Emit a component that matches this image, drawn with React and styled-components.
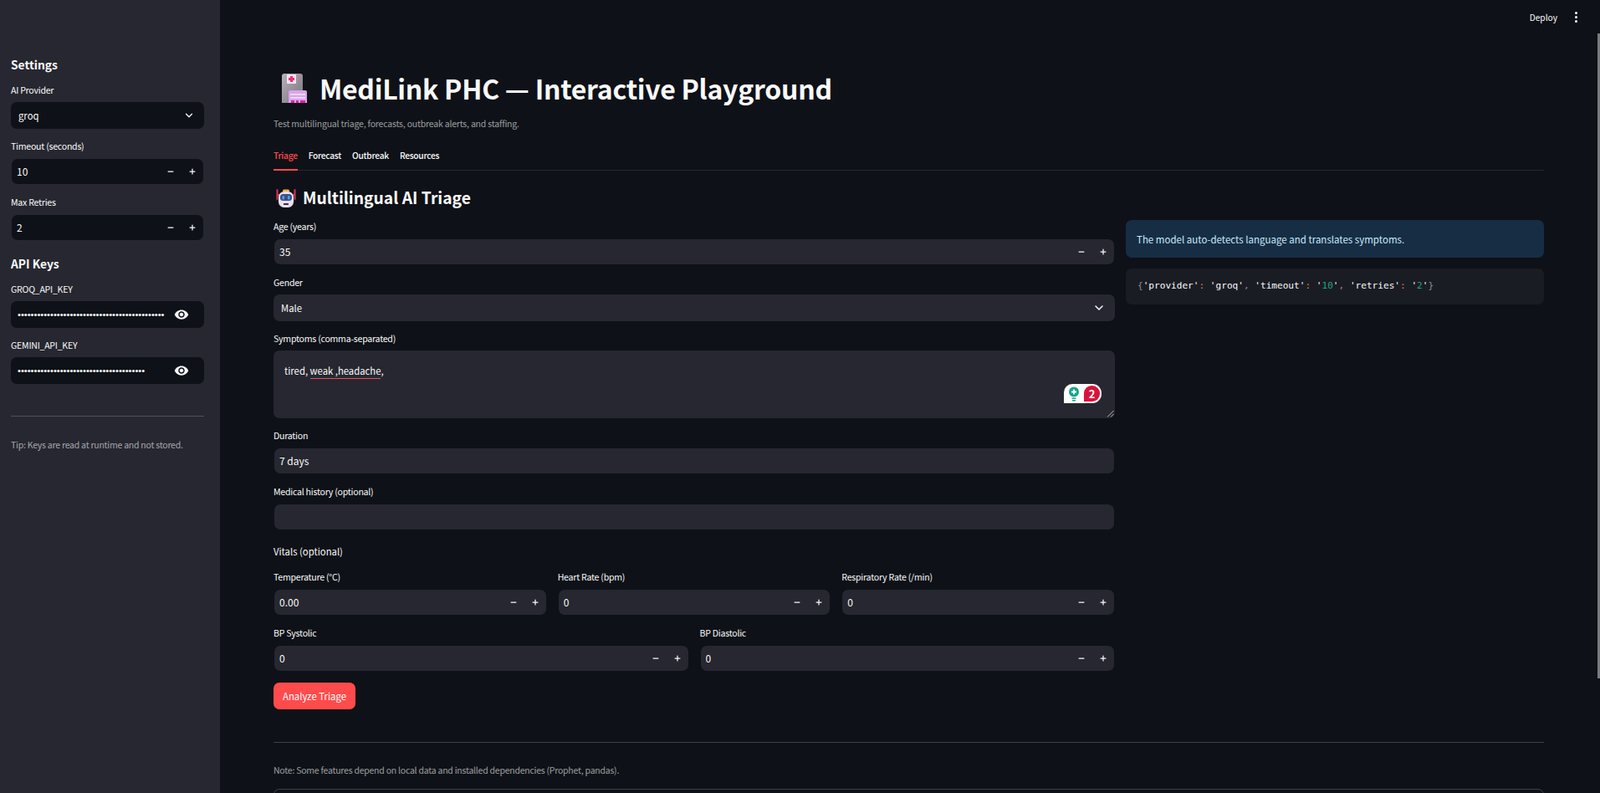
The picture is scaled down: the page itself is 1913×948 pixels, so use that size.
import React from "react";
import styled, { createGlobalStyle } from "styled-components";
import { ChevronDown, Minus, Plus } from "lucide-react";
import { MdVisibility } from "react-icons/md";

const sans = `"Noto Sans CJK SC", "Noto Sans", sans-serif`;

const GlobalStyle = createGlobalStyle`
  html, body {
    margin: 0;
    height: 948px;
    overflow: hidden;
    background: #0e1117;
    color: #fafafa;
    font-family: ${sans};
  }
  * {
    box-sizing: border-box;
  }
`;

const Shell = styled.div`
  display: flex;
  height: 948px;
  overflow: hidden;
`;

const Sidebar = styled.aside`
  flex: 0 0 263px;
  height: 948px;
  padding: 65px 19px 0 13px;
  background: #262730;
`;

const SideHeading = styled.h3`
  margin: ${(p) => (p.$first ? "0 0 11px" : "15px 0 11px")};
  font-size: 13.8px;
  line-height: 24px;
  font-weight: 600;
`;

const Field = styled.div`
  display: flex;
  flex-direction: column;
  margin-bottom: 13px;
`;

const Label = styled.label`
  display: block;
  margin-bottom: 6px;
  font-size: 10.6px;
  line-height: 16px;
  letter-spacing: -0.25px;
  color: #fafafa;
`;

const Box = styled.div`
  display: flex;
  align-items: center;
  height: ${(p) => (p.$narrow ? "30px" : "32px")};
  margin: ${(p) => (p.$narrow ? "1px" : "0")};
  background: ${(p) => (p.$side ? "#0e1117" : "#262730")};
  border-radius: 7px;
`;

const TextInput = styled.input`
  flex: 1;
  min-width: 0;
  padding: 0 7px 2px 6px;
  border: 0;
  outline: 0;
  background: transparent;
  color: #fafafa;
  font-family: ${sans};
  font-size: 12px;
`;

const KeyInput = styled(TextInput)`
  padding: 0 8px;
  font-family: "Liberation Sans", sans-serif;
  font-size: 11.15px;
`;

const SelectText = styled.span`
  flex: 1;
  padding-left: 9px;
  font-size: 11.3px;
`;

const Chevron = styled.span`
  display: flex;
  margin-right: 11px;
  color: #fafafa;
`;

const Step = styled.span`
  display: flex;
  justify-content: center;
  flex: 0 0 26px;
  color: #fafafa;
`;

const EyeButton = styled.span`
  display: flex;
  margin-right: 18px;
  font-size: 18px;
  color: #fafafa;
`;

const Rule = styled.hr`
  margin: ${(p) => p.$margin};
  border: 0;
  border-top: 1px solid rgba(250, 250, 250, 0.2);
`;

const Hint = styled.p`
  margin: 0;
  font-size: 10.5px;
  line-height: 16px;
  letter-spacing: -0.24px;
  color: rgba(250, 250, 250, 0.6);
`;

const Main = styled.main`
  flex: 1;
  min-width: 0;
  padding: 83px 67px 0 64px;
`;

const Toolbar = styled.div`
  position: absolute;
  top: 0;
  right: 0;
  display: flex;
  align-items: center;
  height: 40px;
  padding-right: 27px;
  gap: 21px;
  font-size: 10.2px;
`;

const KebabDots = styled.span`
  display: flex;
  flex-direction: column;
  gap: 2px;
  i {
    width: 3px;
    height: 3px;
    border-radius: 50%;
    background: #fafafa;
  }
`;

const ScrollThumb = styled.div`
  position: absolute;
  top: 40px;
  right: 0;
  width: 3px;
  height: 771px;
  background: #7b7c80;
`;

const Title = styled.h1`
  display: flex;
  align-items: center;
  margin: 0 0 13px;
  height: 44px;
  font-size: 32px;
  line-height: 44px;
  letter-spacing: -0.27px;
  font-weight: 700;
`;

const TitleIcon = styled.svg`
  flex: none;
  width: 30px;
  height: 35px;
  margin: 0 15px 0 10px;
`;

const Subtitle = styled(Hint)`
  margin-bottom: 18px;
  letter-spacing: -0.2px;
`;

const Tabs = styled.nav`
  display: flex;
  gap: 13px;
  height: 30px;
  border-bottom: 1px solid #262730;
  margin-bottom: 18px;
`;

const Tab = styled.span`
  height: 30px;
  line-height: 24px;
  font-size: 10.2px;
  font-weight: 500;
  letter-spacing: -0.25px;
  color: ${(p) => (p.$active ? "#ff4b4b" : "#fafafa")};
  border-bottom: 2px solid ${(p) => (p.$active ? "#ff4b4b" : "transparent")};
`;

const SectionTitle = styled.h2`
  display: flex;
  align-items: center;
  margin: 0 0 11px;
  height: 30px;
  padding-bottom: 2px;
  font-size: 19.3px;
  line-height: 28px;
  font-weight: 600;
`;

const SectionIcon = styled.svg`
  flex: none;
  width: 24px;
  height: 24px;
  margin: 2px 8px 0 3px;
`;

const Columns = styled.div`
  display: grid;
  grid-template-columns: 1006px 500px;
  gap: 13px;
`;

const Info = styled.div`
  display: flex;
  align-items: center;
  height: 45px;
  padding: 0 13px;
  margin-bottom: 13px;
  border-radius: 7px;
  background: #172d43;
  color: #c7ebff;
  font-size: 11.5px;
`;

const Code = styled.pre`
  display: flex;
  align-items: center;
  height: 43px;
  margin: 0;
  padding: 0 14px 2px;
  border-radius: 7px;
  background: #1a1c24;
  color: #fafafa;
  font-family: "DejaVu Sans Mono", monospace;
  font-size: 11.1px;
`;

const Punct = styled.span`
  color: ${(p) => p.$color};
`;

const TextArea = styled.div`
  position: relative;
  height: 81px;
  padding: 15px 13px;
  background: #262730;
  border-radius: 7px;
  font-size: 11.3px;
  line-height: 18px;
`;

const Misspelled = styled.span`
  border-bottom: 1.5px solid #e8505f;
  padding-bottom: 1px;
`;

const GrammarBadge = styled.div`
  position: absolute;
  right: 16px;
  bottom: 18px;
  display: flex;
  align-items: center;
  width: 45px;
  height: 23px;
  padding: 2px;
  border-radius: 10px 11px 11px 0;
  background: #fff;
`;

const BulbWrap = styled.svg`
  width: 22px;
  height: 19px;
`;

const IssueCount = styled.span`
  flex: 1;
  height: 19px;
  border-radius: 9px 9px 9px 0;
  background: #d9143a;
  color: #fff;
  font-size: 13px;
  font-weight: 700;
  line-height: 19px;
  text-align: center;
`;

const ResizeGrip = styled.svg`
  position: absolute;
  right: 1px;
  bottom: 1px;
  width: 9px;
  height: 9px;
`;

const GroupHeading = styled.div`
  margin: 15px 0 13px;
  font-size: 11.3px;
  line-height: 20px;
`;

const Row = styled.div`
  display: grid;
  grid-template-columns: repeat(${(p) => p.$cols}, 1fr);
  gap: 13px;
`;

const PrimaryButton = styled.button`
  display: block;
  width: 98px;
  height: 32px;
  padding: 0;
  border: 0;
  border-radius: 7px;
  background: #ff4b4b;
  color: #fff;
  font-family: ${sans};
  font-size: 11.4px;
`;

const Expander = styled.div`
  height: 60px;
  margin-top: 14px;
  border: 1px solid rgba(250, 250, 250, 0.2);
  border-radius: 7px;
`;

const SelectField = ({ label, value, side, chevron = 14 }) => (
  <Field>
    <Label>{label}</Label>
    <Box $side={side}>
      <SelectText>{value}</SelectText>
      <Chevron>
        <ChevronDown size={chevron} strokeWidth={2.2} />
      </Chevron>
    </Box>
  </Field>
);

const NumberField = ({ label, value, side }) => (
  <Field>
    <Label>{label}</Label>
    <Box $narrow $side={side}>
      <TextInput readOnly defaultValue={value} />
      <Step>
        <Minus size={10} strokeWidth={3} />
      </Step>
      <Step>
        <Plus size={10} strokeWidth={3} />
      </Step>
    </Box>
  </Field>
);

const TextField = ({ label, value = "" }) => (
  <Field>
    <Label>{label}</Label>
    <Box $narrow>
      <TextInput readOnly defaultValue={value} />
    </Box>
  </Field>
);

const KeyField = ({ label, length }) => (
  <Field>
    <Label>{label}</Label>
    <Box $side>
      <KeyInput type="password" readOnly defaultValue={"x".repeat(length)} />
      <EyeButton>
        <MdVisibility />
      </EyeButton>
    </Box>
  </Field>
);

const HospitalEmoji = () => (
  <TitleIcon viewBox="0 0 30 35">
    <defs>
      <linearGradient id="slab" x1="0" y1="0" x2="1" y2="1">
        <stop offset="0" stopColor="#b9b2bd" />
        <stop offset="1" stopColor="#77717d" />
      </linearGradient>
    </defs>
    <path d="M3 0h19a3 3 0 0 1 3 3v32H0V3a3 3 0 0 1 3-3z" fill="url(#slab)" />
    <rect x="6" y="1" width="11" height="11" rx="1" fill="#f7e6ef" />
    <path d="M10 3h3v2h2v3h-2v2h-3V8H8V5h2z" fill="#ef2f7d" />
    <path d="M8 22a2 2 0 0 1 2-2h18a2 2 0 0 1 2 2v13H8z" fill="#d8a6ea" />
    <rect x="10" y="24" width="18" height="1.6" fill="#f1dff8" />
    <rect x="10" y="28" width="18" height="1.6" fill="#f1dff8" />
    <rect x="11" y="32" width="4" height="3" fill="#e01fa0" />
    <rect x="17" y="32" width="3" height="3" fill="#e01fa0" />
    <rect x="22" y="32" width="6" height="3" fill="#e01fa0" />
  </TitleIcon>
);

const RobotEmoji = () => (
  <SectionIcon viewBox="0 0 24 24">
    <rect x="0.5" y="1" width="2" height="13" rx="1" fill="#d9305f" />
    <rect x="21.5" y="1" width="2" height="13" rx="1" fill="#d9305f" />
    <rect x="2" y="7" width="3" height="2" fill="#b03a6a" />
    <rect x="19" y="7" width="3" height="2" fill="#b03a6a" />
    <path d="M8 3a1.5 1.5 0 0 1 1.5-1.5h5A1.5 1.5 0 0 1 16 3v1H8z" fill="#f2b632" />
    <rect x="3" y="4" width="18" height="19" rx="6.5" fill="#e9dff0" />
    <rect x="5" y="7" width="14" height="8" rx="3.5" fill="#3f4e85" />
    <rect x="7.5" y="9" width="2.5" height="4.5" rx="1.2" fill="#38a8f5" />
    <rect x="14" y="9" width="2.5" height="4.5" rx="1.2" fill="#38a8f5" />
    <rect x="9" y="18" width="6" height="2" rx="0.5" fill="#3b3140" />
  </SectionIcon>
);

const Colon = () => <Punct $color="#f0803c">:</Punct>;
const Comma = () => <Punct $color="#8a8d94">, </Punct>;
const Digits = ({ children }) => <Punct $color="#21a184">{children}</Punct>;

export default function App() {
  return (
    <Shell>
      <GlobalStyle />
      <Sidebar>
        <SideHeading $first>Settings</SideHeading>
        <SelectField label="AI Provider" value="groq" side />
        <NumberField label="Timeout (seconds)" value="10" side />
        <NumberField label="Max Retries" value="2" side />
        <SideHeading>API Keys</SideHeading>
        <KeyField label="GROQ_API_KEY" length={45} />
        <KeyField label="GEMINI_API_KEY" length={39} />
        <Rule $margin="38px 0 26px" />
        <Hint>Tip: Keys are read at runtime and not stored.</Hint>
      </Sidebar>

      <Main>
        <Toolbar>
          <span>Deploy</span>
          <KebabDots>
            <i />
            <i />
            <i />
          </KebabDots>
        </Toolbar>
        <ScrollThumb />

        <Title>
          <HospitalEmoji />
          MediLink PHC — Interactive Playground
        </Title>
        <Subtitle>Test multilingual triage, forecasts, outbreak alerts, and staffing.</Subtitle>
        <Tabs>
          <Tab $active>Triage</Tab>
          <Tab>Forecast</Tab>
          <Tab>Outbreak</Tab>
          <Tab>Resources</Tab>
        </Tabs>

        <SectionTitle>
          <RobotEmoji />
          Multilingual AI Triage
        </SectionTitle>

        <Columns>
          <div>
            <NumberField label="Age (years)" value="35" />
            <SelectField label="Gender" value="Male" chevron={16} />
            <Field>
              <Label>Symptoms (comma-separated)</Label>
              <TextArea>
                tired, <Misspelled>weak ,headache</Misspelled>,
                <GrammarBadge>
                  <BulbWrap viewBox="0 0 22 19">
                    <circle cx="10" cy="7.5" r="6" fill="#15a58a" />
                    <rect x="7.5" y="14.5" width="5" height="1.5" fill="#15a58a" />
                    <rect x="8" y="17" width="4" height="1.5" fill="#15a58a" />
                    <path d="M10 4.5v6M7 7.5h6" stroke="#fff" strokeWidth="1.8" />
                  </BulbWrap>
                  <IssueCount>2</IssueCount>
                </GrammarBadge>
                <ResizeGrip viewBox="0 0 9 9">
                  <path d="M8.5 1L1 8.5M8.5 5L5 8.5" stroke="#b9bac0" strokeWidth="1" />
                </ResizeGrip>
              </TextArea>
            </Field>
            <TextField label="Duration" value="7 days" />
            <TextField label="Medical history (optional)" />
            <GroupHeading>Vitals (optional)</GroupHeading>
            <Row $cols={3}>
              <NumberField label="Temperature (°C)" value="0.00" />
              <NumberField label="Heart Rate (bpm)" value="0" />
              <NumberField label="Respiratory Rate (/min)" value="0" />
            </Row>
            <Row $cols={2}>
              <NumberField label="BP Systolic" value="0" />
              <NumberField label="BP Diastolic" value="0" />
            </Row>
            <PrimaryButton>Analyze Triage</PrimaryButton>
          </div>
          <div>
            <Info>The model auto-detects language and translates symptoms.</Info>
            <Code>
              <Punct $color="#8a8d94">{"{"}</Punct>
              <span>'provider'</span>
              <Colon />
              &nbsp;<span>'groq'</span>
              <Comma />
              <span>'timeout'</span>
              <Colon />
              &nbsp;<span>'</span>
              <Digits>10</Digits>
              <span>'</span>
              <Comma />
              <span>'retries'</span>
              <Colon />
              &nbsp;<span>'</span>
              <Digits>2</Digits>
              <span>'</span>
              <Punct $color="#8a8d94">{"}"}</Punct>
            </Code>
          </div>
        </Columns>

        <Rule $margin="39px 0 25px" />
        <Hint>Note: Some features depend on local data and installed dependencies (Prophet, pandas).</Hint>
        <Expander />
      </Main>
    </Shell>
  );
}
